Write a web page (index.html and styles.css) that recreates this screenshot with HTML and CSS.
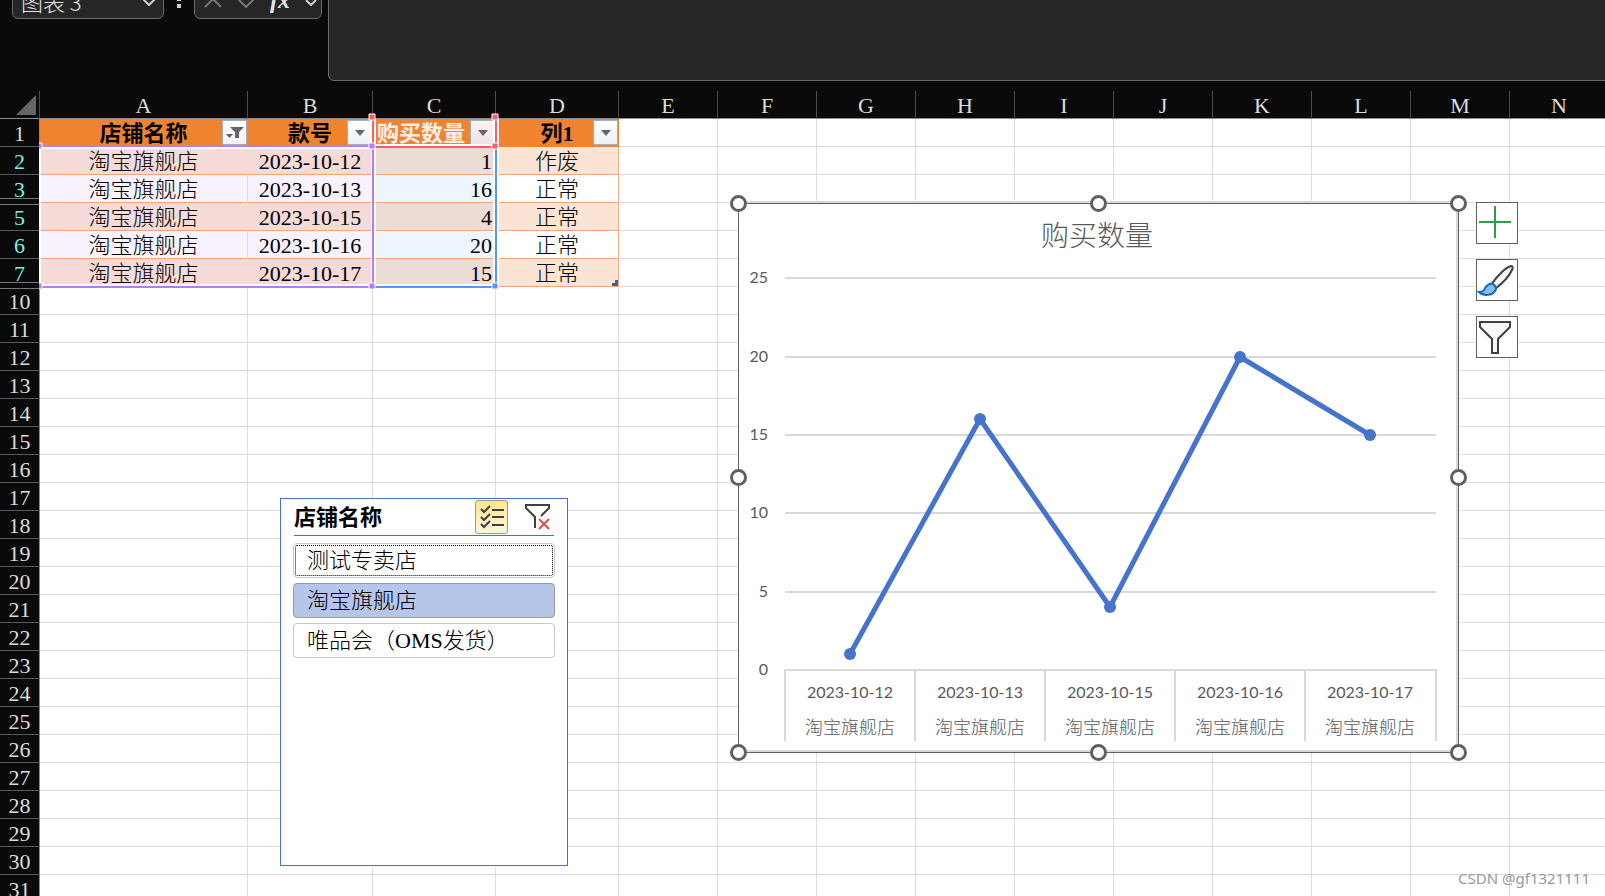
FILE: index.html
```html
<!DOCTYPE html>
<html lang="zh-CN">
<head>
<meta charset="utf-8">
<title>图表 3</title>
<link rel="stylesheet" href="styles.css">
</head>
<body>
<header class="formula-bar">
  <button class="name-box" type="button"><span>图表 3</span>
    <svg width="14" height="8" viewBox="0 0 14 8"><path d="M1 1l6 6 6-6"/></svg>
  </button>
  <span class="dots"><i></i><i></i></span>
  <div class="fx-box">
    <svg class="dim" width="18" height="10" viewBox="0 0 18 10"><path d="M1 9l8-8 8 8"/></svg>
    <svg class="dim" width="18" height="10" viewBox="0 0 18 10"><path d="M1 1l8 8 8-8"/></svg>
    <button class="fx" type="button">fx</button>
    <svg width="12" height="7" viewBox="0 0 12 7"><path d="M1 1l5 5 5-5"/></svg>
  </div>
  <textarea class="formula" aria-label="编辑栏"></textarea>
</header>

<main class="sheet">
  <table class="grid">
    <colgroup>
      <col class="w-head"><col class="w-a"><col class="w-b"><col class="w-c"><col class="w-c">
      <col class="w-n"><col class="w-n"><col class="w-n"><col class="w-n"><col class="w-n">
      <col class="w-n"><col class="w-n"><col class="w-n"><col class="w-n"><col>
    </colgroup>
    <thead>
      <tr><th class="corner"><svg width="20" height="20" viewBox="0 0 20 20"><path d="M20 0v20H0z"/></svg></th><th>A</th><th>B</th><th>C</th><th>D</th><th>E</th><th>F</th><th>G</th><th>H</th><th>I</th><th>J</th><th>K</th><th>L</th><th>M</th><th>N</th></tr>
    </thead>
    <tbody id="rows">
      <tr class="titles"><th>1</th>
        <td>店铺名称<button class="drop" type="button" aria-label="筛选 店铺名称"><svg width="18" height="14" viewBox="0 0 18 14"><path d="M4 1h14l-5 5v6h-4V6zM0 8h7l-3.500 4z"/></svg></button></td>
        <td>款号<button class="drop" type="button" aria-label="筛选 款号"><svg width="10" height="6" viewBox="0 0 10 6"><path d="M0 0h10L5 6z"/></svg></button></td>
        <td class="series">购买数量<button class="drop" type="button" aria-label="筛选 购买数量"><svg width="10" height="6" viewBox="0 0 10 6"><path d="M0 0h10L5 6z"/></svg></button></td>
        <td class="last">列1<button class="drop" type="button" aria-label="筛选 列1"><svg width="10" height="6" viewBox="0 0 10 6"><path d="M0 0h10L5 6z"/></svg></button></td>
      </tr>
      <tr class="data band"><th>2</th><td>淘宝旗舰店</td><td>2023-10-12</td><td>1</td><td>作废</td></tr>
      <tr class="data gap"><th>3</th><td>淘宝旗舰店</td><td>2023-10-13</td><td>16</td><td>正常</td></tr>
      <tr class="data band"><th>5</th><td>淘宝旗舰店</td><td>2023-10-15</td><td>4</td><td>正常</td></tr>
      <tr class="data"><th>6</th><td>淘宝旗舰店</td><td>2023-10-16</td><td>20</td><td>正常</td></tr>
      <tr class="data band gap"><th>7</th><td>淘宝旗舰店</td><td>2023-10-17</td><td>15</td><td>正常<i class="table-end"></i></td></tr>
    </tbody>
  </table>

  <svg class="ranges" width="470" height="200" viewBox="0 0 470 200">
    <g class="halo"><path d="M1 54v142M0 57h333M0 194h333M333 57v137M336 57v137M455 57v137M459 57v142M335 194h125M335 54h125M332 28v28M336 28v28M455 28v28M459 28v28"/></g>
    <path class="purple" d="M0 55h334v141H0"/>
    <path class="blue" d="M335 196h122V56"/>
    <path class="red" d="M334 28v28h123V28"/>
    <g class="knobs">
      <path class="k-purple" d="M-3 52h6v6h-6zM330 52h6v6h-6zM-3 192h6v6h-6zM330 192h6v6h-6z"/>
      <path class="k-blue" d="M453 192h6v6h-6z"/>
      <path class="k-red" d="M453 52h6v6h-6zM330 23h6v6h-6zM453 23h6v6h-6z"/>
    </g>
  </svg>

  <section class="slicer">
    <div class="slicer-head">
      <h2>店铺名称</h2>
      <button class="multi" type="button" aria-label="多选"><svg width="24" height="24" viewBox="0 0 24 24"><path d="M1 4l3 3 6-6M1 12l3 3 6-6M1 19l3 3 6-6M12 5h12M12 12h12M12 20h12"/></svg></button>
      <button class="clear" type="button" aria-label="清除筛选器"><svg width="26" height="26" viewBox="0 0 26 26"><path d="M10 24V13L1 4V1h23v3l-8 8"/><path class="cross" d="M14 15l10 10M24 15L14 25"/></svg></button>
    </div>
    <button class="item focus" type="button">测试专卖店</button>
    <button class="item on" type="button">淘宝旗舰店</button>
    <button class="item" type="button">唯品会（OMS发货）</button>
  </section>

  <figure class="chart">
    <svg width="740" height="570" viewBox="729 194 740 570">
      <path class="paper" d="M738 203h720v549H738z"/>
      <path class="edge" d="M739 202h718v549H739"/>
      <path class="frame" d="M738.500 203.500h720v549h-720z"/>
      <text class="chart-title" x="1097" y="246">购买数量</text>
      <path class="rule" d="M785 278h651M785 357h651M785 435h651M785 513h651M785 592h651M784 670h653M785 670v71M915 670v71M1045 670v71M1175 670v71M1305 670v71M1436 670v71"/>
      <g class="ticks">
        <text x="768" y="283">25</text><text x="768" y="362">20</text><text x="768" y="440">15</text>
        <text x="768" y="518">10</text><text x="768" y="597">5</text><text x="768" y="675">0</text>
      </g>
      <g class="cats">
        <text x="850" y="698">2023-10-12</text><text x="980" y="698">2023-10-13</text><text x="1110" y="698">2023-10-15</text><text x="1240" y="698">2023-10-16</text><text x="1370" y="698">2023-10-17</text>
      </g>
      <g class="shops">
        <text x="850" y="734">淘宝旗舰店</text><text x="980" y="734">淘宝旗舰店</text><text x="1110" y="734">淘宝旗舰店</text><text x="1240" y="734">淘宝旗舰店</text><text x="1370" y="734">淘宝旗舰店</text>
      </g>
      <path class="line" d="M850 654l130-235 130 188 130-250 130 78"/>
      <g class="points"><circle cx="850" cy="654" r="6"/><circle cx="980" cy="419" r="6"/><circle cx="1110" cy="607" r="6"/><circle cx="1240" cy="357" r="6"/><circle cx="1370" cy="435" r="6"/></g>
      <g class="handles"><circle cx="738.500" cy="203.500" r="7"/><circle cx="1098.500" cy="203.500" r="7"/><circle cx="1458.500" cy="203.500" r="7"/><circle cx="738.500" cy="477.500" r="7"/><circle cx="1458.500" cy="477.500" r="7"/><circle cx="738.500" cy="752.500" r="7"/><circle cx="1098.500" cy="752.500" r="7"/><circle cx="1458.500" cy="752.500" r="7"/></g>
    </svg>
  </figure>

  <div class="chart-tools">
    <button type="button" aria-label="图表元素"><svg width="40" height="40" viewBox="0 0 40 40"><path class="plus" d="M18 3v32M2 19h32"/></svg></button>
    <button type="button" aria-label="图表样式"><svg width="40" height="40" viewBox="0 0 40 40"><path class="ink" d="M14 25C20 16 29 7 34 6c2 0 2 2 1 4-3 6-9 13-16 18z"/><path class="paint" d="M2 32c5 0 5-2 6-4 2-3 5-5 8-4 3 2 4 5 2 7-3 5-12 5-16 1z"/></svg></button>
    <button type="button" aria-label="图表筛选器"><svg width="40" height="40" viewBox="0 0 40 40"><path class="ink" d="M3 5h30v5L21 22v14h-6V22L3 10z"/></svg></button>
  </div>
  <span class="mark">CSDN @gf1321111</span>
</main>
<script src="grid.js"></script>
</body>
</html>
```
FILE: styles.css
```css
* { box-sizing: border-box; }
body {
  margin: 0;
  height: 100vh;
  overflow: hidden;
  display: flex;
  flex-direction: column;
  background: #0a0a0a;
  color: #000;
  font: 300 22px/25px "Liberation Serif", "Noto Sans CJK SC", serif;
}
button {
  margin: 0;
  padding: 0;
  font: inherit;
  color: inherit;
  background: none;
  border: 0;
}
svg { display: block; fill: none; }
i { display: block; }

/* formula bar */
.formula-bar {
  flex: none;
  height: 91px;
  display: flex;
  align-items: flex-start;
  padding-left: 12px;
  color: #e6e6e6;
}
.formula-bar svg { stroke: #d0d0d0; stroke-width: 2; }
.formula-bar svg.dim { stroke: #777; }
.name-box, .fx-box {
  height: 39px;
  margin-top: -20px;
  display: flex;
  align-items: center;
  background: #262626;
  border: 1px solid #6b6b6b;
  border-radius: 6px;
}
.name-box { width: 152px; padding: 4px 7px 0 8px; justify-content: space-between; font-family: "Noto Sans CJK SC", sans-serif; }
.dots { width: 30px; padding-left: 13px; display: grid; gap: 3px; margin-top: -3px; }
.dots i { width: 4px; height: 4px; background: #d0d0d0; }
.fx-box { width: 128px; padding: 6px 4px 0 9px; justify-content: space-between; }
.fx { font-size: 24px; font-style: italic; font-weight: bold; padding-bottom: 4px; }
.formula {
  flex: 1;
  height: 91px;
  margin: -10px -10px 0 6px;
  background: #262626;
  border: 1px solid #6b6b6b;
  border-radius: 6px;
  resize: none;
}

/* grid */
.sheet { flex: 1; min-height: 0; position: relative; overflow: hidden; background: #fff; }
.grid {
  width: 100%;
  min-width: 1609px;
  table-layout: fixed;
  border-collapse: separate;
  border-spacing: 0;
}
.w-head { width: 40px; }
.w-a { width: 208px; }
.w-b { width: 125px; }
.w-c { width: 123px; }
.w-n { width: 99px; }
.grid th, .grid td {
  height: 28px;
  padding: 3px 0 0;
  line-height: 24px;
  white-space: nowrap;
  text-align: center;
  vertical-align: top;
  border: 0 solid #dedede;
  border-width: 0 1px 1px 0;
}
.grid th { background: #0a0a0a; color: #dcdcdc; font-weight: normal; }
.grid thead th { border-color: #8a8a92; border-right-color: #4a4a4a; }
.grid .corner { padding: 4px 3px 0 16px; }
.corner path { fill: #666; }
.grid tbody th { border-color: #5a5a60; border-right-color: #8a8a8a; position: relative; }
.grid .data th { color: #6ff5e6; }
.grid .gap th { border-bottom-color: #0a0a0a; }
.gap th::after {
  content: "";
  position: absolute;
  z-index: 1;
  left: 0;
  right: 0;
  bottom: -3px;
  height: 5px;
  background: #0a0a0a;
  border: solid #77777c;
  border-width: 1px 0;
}
.grid .titles td:nth-child(-n+5) {
  position: relative;
  background: #f08330;
  border-color: #f08330;
  font-weight: bold;
}
.grid .titles .series { color: #fff0ee; text-align: left; padding-left: 4px; }
.drop {
  position: absolute;
  right: 0;
  top: 1px;
  width: 25px;
  height: 25px;
  display: grid;
  place-items: center;
  background: linear-gradient(#fff, #eef1f6);
  border: 1px solid #a6adb8;
}
.series .drop { background: linear-gradient(#fff1f2, #efe2e6); }
.drop path { fill: #666; }
.grid .data td:nth-child(-n+5) { border-bottom-color: #f0a67c; }
.grid .data td:nth-child(2), .grid .data td:nth-child(3) { background: #f7f2fe; }
.grid .data td:nth-child(4) { background: #edf5fe; text-align: right; padding-right: 3px; }
.grid .data td:nth-child(5) { border-right-color: #f4b183; position: relative; }
.grid .band td:nth-child(2), .grid .band td:nth-child(3) { background: #f5dad7; border-right-color: #f5dad7; }
.grid .band td:nth-child(4) { background: #ebddd6; }
.grid .band td:nth-child(5) { background: #fbe4d3; }
.table-end {
  position: absolute;
  right: 0;
  bottom: 0;
  width: 6px;
  height: 6px;
  background: #4559b0;
  clip-path: polygon(50% 0, 100% 0, 100% 100%, 0 100%, 0 50%, 50% 50%);
}

/* source range outlines */
.ranges { position: absolute; left: 39px; top: 0; }
.ranges path { stroke-width: 2; }
.ranges .halo path { stroke: #fff; }
.ranges .purple { stroke: #b57bff; }
.ranges .blue { stroke: #5796ff; }
.ranges .red { stroke: #ff5c66; }
.ranges .knobs path { stroke: #fff; stroke-width: 1; }
.k-purple { fill: #b57bff; }
.k-blue { fill: #5796ff; }
.k-red { fill: #ff5c66; }

/* slicer */
.slicer {
  position: absolute;
  left: 280px;
  top: 407px;
  width: 288px;
  height: 368px;
  padding: 1px 12px;
  background: #fff;
  border: 1px solid #4472c4;
  display: flex;
  flex-direction: column;
}
.slicer-head {
  flex: none;
  height: 36px;
  margin: 0 1px 7px;
  display: flex;
  align-items: flex-start;
  border-bottom: 1px solid #4472c4;
}
.slicer h2 { flex: 1; margin: 5px 0 0; font-size: 22px; line-height: 25px; }
.multi {
  width: 33px;
  height: 34px;
  display: grid;
  place-items: center;
  background: linear-gradient(#fbe68a, #fdf6dc);
  border: 1px solid #999;
  border-radius: 3px;
}
.multi path, .clear path { stroke: #404040; stroke-width: 2; }
.clear { margin: 4px 3px 0 17px; }
.clear .cross { stroke: #e8484c; }
.item {
  flex: none;
  height: 35px;
  margin-bottom: 5px;
  padding: 0 13px;
  text-align: left;
  border: 1px solid #c8c8c8;
  border-radius: 4px;
}
.item.on { background: #b4c6ea; border-color: #999; }
.item.focus { outline: 1px dotted #000; outline-offset: -3px; }

/* chart */
.chart { position: absolute; left: 729px; top: 103px; margin: 0; }
.paper { fill: #fff; }
.edge, .rule { stroke: #d9d9d9; stroke-width: 2; }
.frame { stroke: #606060; }
.chart text { fill: #595959; text-anchor: middle; }
.chart .chart-title { font-size: 28px; }
.chart .ticks text { text-anchor: end; }
.ticks, .cats { font: 16px Lato, sans-serif; }
.shops { font-size: 18px; }
.line { stroke: #4673cc; stroke-width: 5; stroke-linejoin: round; }
.points { fill: #4673cc; }
.handles { fill: #fff; stroke: #606060; stroke-width: 3; }
.chart-tools { position: absolute; left: 1476px; top: 111px; display: grid; gap: 15px; }
.chart-tools button { width: 42px; height: 42px; background: #fff; border: 1px solid #606060; }
.plus { stroke: #2e9e4a; stroke-width: 2; }
.ink { fill: #f7f7f7; stroke: #404040; stroke-width: 2; }
.paint { fill: #83beec; stroke: #1068bb; stroke-width: 2; }
.mark {
  position: absolute;
  right: 15px;
  bottom: 7px;
  color: #999;
  font: 15px/22px "Noto Sans", sans-serif;
}
```
FILE: grid.js
```js
const body = document.getElementById("rows");
const columns = 14;

for (let n = 10; n <= 31; n++) {
  const row = body.insertRow();
  const head = document.createElement("th");
  head.textContent = n;
  row.append(head);
}

for (const row of body.rows) {
  while (row.cells.length <= columns) row.insertCell();
}
```
